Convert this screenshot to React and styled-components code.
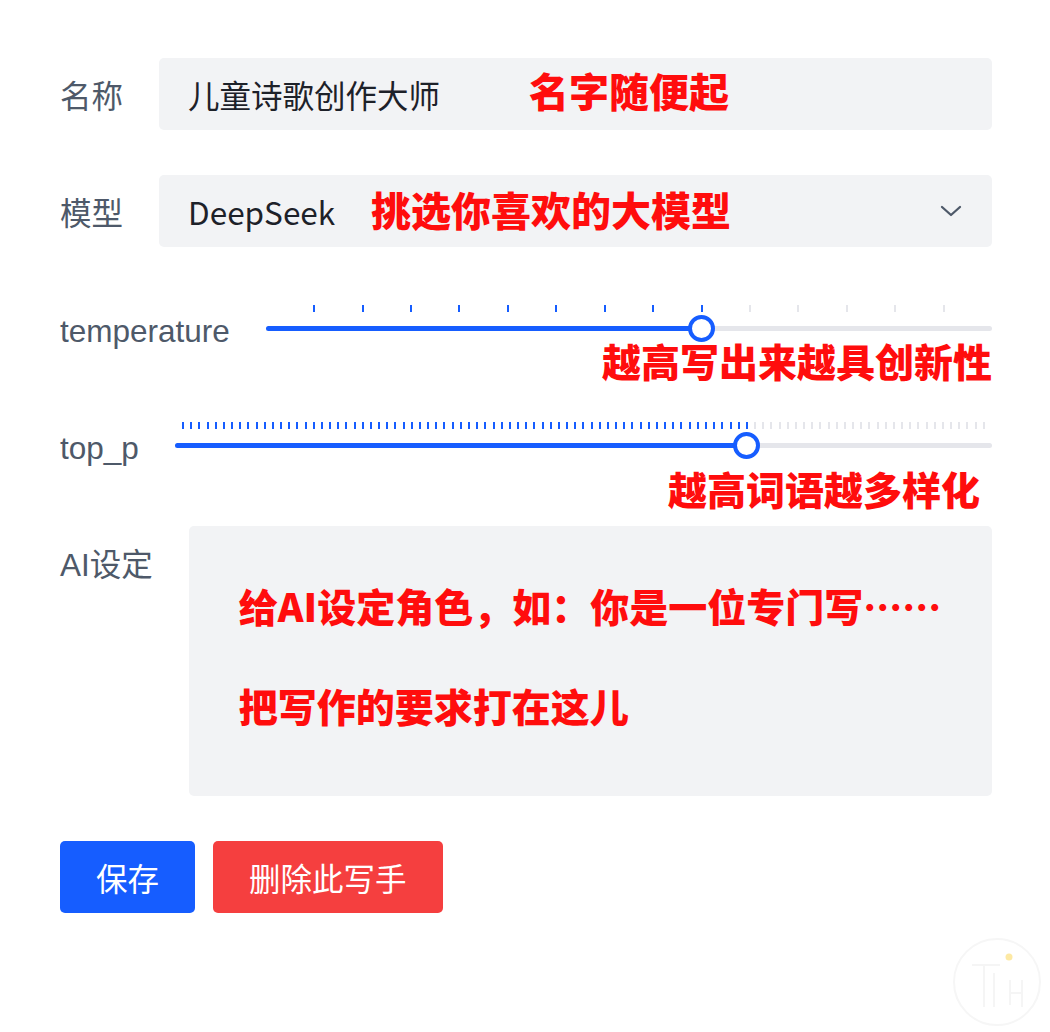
import React from 'react'
import styled, { createGlobalStyle } from 'styled-components'

const GlobalStyle = createGlobalStyle`
  html, body {
    margin: 0;
    padding: 0;
    background: #ffffff;
  }
  body {
    font-family: "Noto Sans CJK SC", "Noto Sans", sans-serif;
  }
`

const Page = styled.div`
  position: relative;
  width: 1050px;
  height: 1032px;
  box-sizing: border-box;
  padding: 58px 58px 0 60px;
  overflow: hidden;
`

const Form = styled.div`
  display: flex;
  flex-direction: column;
  gap: 45px;
`

const Row = styled.div`
  position: relative;
  display: flex;
  align-items: ${p => (p.top ? 'flex-start' : 'center')};
  gap: 36px;
  min-height: 72px;
`

const Label = styled.div`
  flex: none;
  box-sizing: border-box;
  height: 72px;
  padding-top: 6px;
  font-family: "Liberation Sans", "Noto Sans CJK SC", sans-serif;
  font-size: 31.5px;
  line-height: 66px;
  color: #4e5969;
  white-space: nowrap;
`

const Field = styled.div`
  position: relative;
  flex: 1;
  display: flex;
  align-items: center;
  justify-content: space-between;
  height: 72px;
  box-sizing: border-box;
  padding: 0 30px 0 29px;
  background: #f2f3f5;
  border-radius: 5px;
  font-size: 31.5px;
  color: #1d2129;
`

const Note = styled.div`
  position: absolute;
  left: ${p => p.left}px;
  top: 0;
  height: 100%;
  display: flex;
  align-items: center;
  margin-top: ${p => p.shift || 0}px;
  font-size: ${p => p.size || 40}px;
  font-weight: 900;
  color: #ff0d0d;
  white-space: nowrap;
  pointer-events: none;
`

const SliderNote = styled.div`
  position: absolute;
  right: ${p => p.right}px;
  top: ${p => p.top}px;
  font-size: 39px;
  line-height: 40px;
  font-weight: 900;
  color: #ff0d0d;
  white-space: nowrap;
`

const SliderBox = styled.div`
  position: relative;
  flex: 1;
  height: 72px;
`

const Track = styled.div`
  position: absolute;
  left: 0;
  right: 0;
  top: 34px;
  height: 4.5px;
  border-radius: 3px;
  background: #e5e6eb;
`

const Fill = styled.div`
  position: absolute;
  left: 0;
  top: 0;
  bottom: 0;
  border-radius: 3px;
  background: #165dff;
`

const Tick = styled.div`
  position: absolute;
  top: 13px;
  width: 2px;
  height: 7px;
  margin-left: -1px;
  background: ${p => (p.active ? '#165dff' : '#e5e6eb')};
`

const Thumb = styled.div`
  position: absolute;
  top: 36px;
  width: 27px;
  height: 27px;
  box-sizing: border-box;
  margin: -13.5px 0 0 -13.5px;
  border: 4.5px solid #165dff;
  border-radius: 50%;
  background: #ffffff;
`

const TextArea = styled.div`
  flex: 1;
  height: 270px;
  box-sizing: border-box;
  padding: 59px 40px 0 50px;
  background: #f2f3f5;
  border-radius: 5px;
  display: flex;
  flex-direction: column;
  gap: 60px;
`

const AreaLine = styled.div`
  font-size: 39px;
  line-height: 40px;
  font-weight: 900;
  color: #ff0d0d;
  white-space: nowrap;
`

const Buttons = styled.div`
  display: flex;
  gap: 18px;
`

const Button = styled.button`
  height: 72px;
  padding: 0 36px;
  border: none;
  border-radius: 5px;
  font-family: inherit;
  font-size: 31.5px;
  color: #ffffff;
  background: ${p => (p.danger ? '#f53f3f' : '#165dff')};
`

const Mark = styled.svg`
  position: absolute;
  left: 950px;
  top: 935px;
`

const Slider = ({ steps, value }) => {
  const pct = (value / steps) * 100
  const ticks = []
  for (let i = 1; i < steps; i++) ticks.push(i)
  return (
    <SliderBox>
      {ticks.map(i => (
        <Tick key={i} active={i <= value} style={{ left: `${(i / steps) * 100}%` }} />
      ))}
      <Track>
        <Fill style={{ width: `${pct}%` }} />
      </Track>
      <Thumb style={{ left: `${pct}%` }} />
    </SliderBox>
  )
}

const Chevron = () => (
  <svg width="22" height="12" viewBox="0 0 22 12">
    <path d="M2 2 L11 10 L20 2" fill="none" stroke="#4e5969" strokeWidth="2.3" strokeLinecap="round" strokeLinejoin="round" />
  </svg>
)

const App = () => (
  <Page>
    <GlobalStyle />
    <Form>
      <Row>
        <Label>名称</Label>
        <Field>
          儿童诗歌创作大师
          <Note left={370} shift={-4}>名字随便起</Note>
        </Field>
      </Row>
      <Row>
        <Label>模型</Label>
        <Field>
          <span>DeepSeek</span>
          <Chevron />
          <Note left={212} shift={-2}>挑选你喜欢的大模型</Note>
        </Field>
      </Row>
      <Row>
        <Label>temperature</Label>
        <Slider steps={15} value={9} />
        <SliderNote right={0} top={48}>越高写出来越具创新性</SliderNote>
      </Row>
      <Row>
        <Label>top_p</Label>
        <Slider steps={100} value={70} />
        <SliderNote right={12} top={59}>越高词语越多样化</SliderNote>
      </Row>
      <Row top>
        <Label>AI设定</Label>
        <TextArea>
          <AreaLine>给AI设定角色，如：你是一位专门写……</AreaLine>
          <AreaLine>把写作的要求打在这儿</AreaLine>
        </TextArea>
      </Row>
      <Buttons>
        <Button>保存</Button>
        <Button danger>删除此写手</Button>
      </Buttons>
    </Form>
    <Mark width="100" height="100" viewBox="0 0 100 100">
      <circle cx="47" cy="47" r="43" fill="none" stroke="#f6f6f6" strokeWidth="2" />
      <path d="M22 30 H50 M34 30 V72 M44 38 V72 M60 45 V70 M60 58 H72 M72 45 V72" fill="none" stroke="#f5f5f5" strokeWidth="2" />
      <circle cx="59" cy="22" r="3.5" fill="#fde9a4" />
    </Mark>
  </Page>
)

export default App
